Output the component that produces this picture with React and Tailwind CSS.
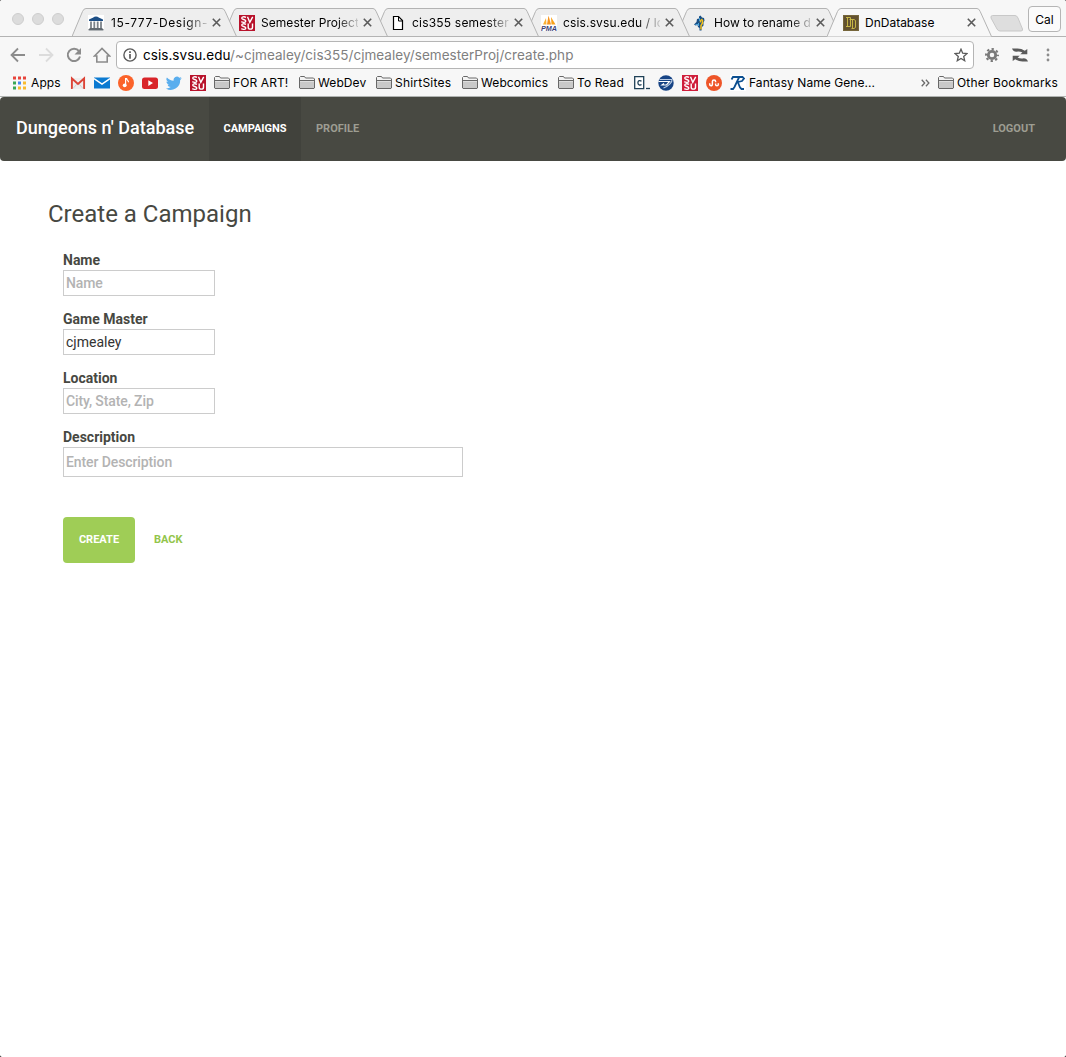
import React from "react";

const Pillars = () => (
  <svg width="16" height="16" viewBox="0 0 16 16">
    <rect width="16" height="16" fill="#fff" />
    <path d="M1 4.500C4 3.500 6 1.500 8 1.500s4 2 7 3V6H1z" fill="#1d4f86" />
    <path d="M3 6.500v7M6.300 6.500v7M9.700 6.500v7M13 6.500v7" stroke="#7b8288" strokeWidth="1.800" />
    <path d="M1.500 13h13v1h1v1.500H.500V14h1z" fill="#626a71" />
  </svg>
);

const Svsu = ({ bg = "#b8122b" }) => (
  <svg width="16" height="16" viewBox="0 0 16 16">
    <rect width="16" height="16" fill={bg} />
    <g fill="none" stroke="#fff" strokeWidth="1.400">
      <path d="M7 2.300C5 1.200 2.500 1.800 2.800 3.300c.3 1.500 4 1 4 2.700C6.800 7.600 4 7.700 2.300 6.700" />
      <path d="M8.500 1.800 10.800 7.300 13.700 1.800" />
      <path d="M7 9.300c-2-1.100-4.500-.5-4.200 1 .3 1.500 4 1 4 2.700 0 1.600-2.800 1.700-4.500.7" />
      <path d="M9.200 8.600v3.600c0 2.500 4.300 2.500 4.300 0V8.600" />
    </g>
  </svg>
);

const Page = () => (
  <svg width="16" height="16" viewBox="0 0 16 16">
    <path d="M3.500 1.500h5l4 4v9h-9z" fill="#fff" stroke="#000" strokeWidth="1.200" />
    <path d="M8.500 1.500v4.500h4" fill="none" stroke="#000" />
  </svg>
);

const Pma = () => (
  <svg width="16" height="16" viewBox="0 0 16 16">
    <rect width="16" height="16" fill="#fff" />
    <path d="M2 9.500 5 3l.5 6.500z" fill="#fbb034" />
    <path d="M6 9.500 7.500.500l2.500 9z" fill="#f7941d" />
    <path d="M10.500 9.500 10 2l4.500 7.500z" fill="#f9a21b" />
    <text x="0" y="15.600" textLength="16" lengthAdjust="spacingAndGlyphs" fontFamily="Liberation Sans" fontSize="7" fontWeight="700" fontStyle="italic" fill="#3c3f78">PMA</text>
  </svg>
);

const Knight = () => (
  <svg width="16" height="16" viewBox="0 0 16 16">
    <path d="M7 1.500 8.500.500 10 2.500l2 .5.500 2.500-1 2v3l-1.500 1.500-.5 3.500H7.500V13L6 12l-.5-2-2 .5-1.500-1L4.500 7 5 4l2-.5z" fill="#174f86" />
    <path d="M10.500 4 8.500 5.500v2M10.500 5v3L9 10.500v4" fill="none" stroke="#f7c21b" strokeWidth="1.500" />
    <path d="M3.500 9.500H6M7.500 3v3M6.500 8v3" stroke="#4ea3d8" />
  </svg>
);

const Dnd = () => (
  <svg width="16" height="16" viewBox="0 0 16 16">
    <rect width="16" height="16" fill="#63522f" />
    <rect x=".5" y=".5" width="15" height="15" fill="none" stroke="#8a7a48" strokeDasharray="1 1" />
    <path d="M3 2.500h4.500v9H3M4.500 2.500v9M6.500 4.500H11l1.500 1v7L11 13.500H8.500M9.500 4.500v9" fill="none" stroke="#d0bf48" strokeWidth=".9" />
  </svg>
);

const Folder = () => (
  <svg width="16" height="14" viewBox="0 0 16 14">
    <path d="M.5 12V1.500l1-1h4l1 1.500h8l1 1V12l-.5.500H1z" fill="#f4f4f4" stroke="#686868" />
    <path d="M1 5.500h14V12H1z" fill="#c9c9c9" />
    <path d="M1 4.500h14" stroke="#686868" />
  </svg>
);

const Gmail = () => (
  <svg width="16" height="16" viewBox="0 0 16 16">
    <path d="M1 3h14v11H1z" fill="#eee" />
    <path d="M1.900 14V3.500L8 9l6.100-5.500V14" fill="none" stroke="#dc4437" strokeWidth="1.900" />
    <path d="m3 13.500 4-4.500M13 13.500 9 9" stroke="#d0d0d0" />
  </svg>
);

const Outlook = () => (
  <svg width="16" height="16" viewBox="0 0 16 16">
    <path d="M0 2.500h16v11H0z" fill="#0b7ad1" />
    <path d="m0 3.500 8 5.500 8-5.500" fill="none" stroke="#fff" strokeWidth="1.500" />
  </svg>
);

const Note = () => (
  <svg width="16" height="16" viewBox="0 0 16 16">
    <circle cx="8" cy="8" r="8" fill="#fb632a" />
    <circle cx="6.700" cy="10.300" r="1.900" fill="#fff" />
    <path d="M7.600 10.500V3.500h1c0 1.700 1.900 1.600 1.900 3.800" fill="none" stroke="#fff" strokeWidth="1.200" />
  </svg>
);

const Youtube = () => (
  <svg width="16" height="16" viewBox="0 0 16 16">
    <rect x="0" y="2.500" width="16" height="11.500" rx="2.500" fill="#d9252a" />
    <path d="M6.300 5.300v5.600L11 8.100z" fill="#fff" />
  </svg>
);

const Twitter = () => (
  <svg width="16" height="16" viewBox="0 0 24 24" fill="#5aaeee">
    <path d="M23.600 4.900c-.9.400-1.800.7-2.800.8 1-.6 1.800-1.600 2.200-2.700-1 .6-2 1-3.100 1.200a4.900 4.900 0 0 0-8.400 4.500C7.400 8.500 3.800 6.500 1.400 3.600a4.900 4.900 0 0 0 1.500 6.600c-.8 0-1.600-.2-2.200-.6v.1c0 2.400 1.700 4.400 3.900 4.800-.7.200-1.500.2-2.200.1.600 2 2.400 3.400 4.600 3.400A9.900 9.900 0 0 1-.3 20a13.900 13.900 0 0 0 21.500-12.400c1-.7 1.800-1.600 2.400-2.700z" />
  </svg>
);

const Cbox = () => (
  <svg width="16" height="16" viewBox="0 0 16 16">
    <path d="M.7 1.700h9v12h-9z" fill="#fff" stroke="#1f4056" strokeWidth="1.300" />
    <path d="M7.500 6.200C6 5 3.900 5.600 3.900 7.800S6 10.600 7.500 9.500" fill="none" stroke="#1f4056" strokeWidth="1.300" />
    <path d="M12 13.500h4" stroke="#1f4056" strokeWidth="1.300" />
  </svg>
);

const Globe = () => (
  <svg width="16" height="16" viewBox="0 0 16 16">
    <circle cx="8" cy="8" r="7.700" fill="#174485" />
    <path d="M.5 6.500h11l-3 3.500H4l2-1.500" fill="none" stroke="#fff" strokeWidth="1.200" />
    <path d="M1.500 4.500h12.500C14.500 7 11 11 5.500 13" fill="none" stroke="#b9cbe3" strokeWidth="1.100" />
  </svg>
);

const Stumble = () => (
  <svg width="16" height="16" viewBox="0 0 16 16">
    <circle cx="8" cy="8" r="8" fill="#ee5528" />
    <path d="M3.700 8.300v1c0 1.900 2.700 1.900 2.700 0V6.500c0-1.900 3.200-1.900 3.200 0v.8M9.600 8.500v1c0 1.800 2.700 1.800 2.700 0V8.300" fill="none" stroke="#fff" strokeWidth="1.500" />
  </svg>
);

const Rune = () => (
  <svg width="16" height="16" viewBox="0 0 16 16">
    <rect width="16" height="16" fill="#fff" />
    <path d="M1.500 4.500 3 2h9.500l1.500 1.500L12 6 6 7.500M9 2.500 4.500 12 3 14H.5M8 7.500l2 5 1.500 1.500H14" fill="none" stroke="#0c4f90" strokeWidth="1.800" />
  </svg>
);

const Apps = () => (
  <svg width="14" height="14" viewBox="0 0 14 14">
    <path d="M0 .5h3v3H0zM5 .5h3v3H5zM10 .5h3v3h-3z" fill="#e8453c" />
    <path d="M0 5.500h3v3H0z" fill="#3aa757" />
    <path d="M5 5.500h3v3H5z" fill="#4688f1" />
    <path d="M10 5.500h3v3h-3z" fill="#f9bb2d" />
    <path d="M0 10.500h3v3H0z" fill="#3aa757" />
    <path d="M5 10.500h3v3H5zM10 10.500h3v3h-3z" fill="#f9bb2d" />
  </svg>
);

const tabs = [
  { icon: <Pillars />, title: "15-777-Design-", z: "z-[6]", ls: "tracking-[0.6px] indent-[1px]" },
  { icon: <Svsu />, title: "Semester Project", z: "z-[5]", ls: "tracking-[0.05px]" },
  { icon: <Page />, title: "cis355 semester", z: "z-[4]", ls: "tracking-[0.2px]" },
  { icon: <Pma />, title: "csis.svsu.edu / lo", z: "z-[3]", ls: "tracking-[0.15px]" },
  { icon: <Knight />, title: "How to rename d", z: "z-[2]", ls: "tracking-[0px]" },
  { icon: <Dnd />, title: "DnDatabase", z: "z-[7]", ls: "tracking-[0px]", active: true },
];

function Tab({ icon, title, z, ls, active }) {
  return (
    <div className={`relative -mr-[14px] h-[29px] w-[165px] shrink-0 ${z}`}>
      <svg className="absolute inset-0" width="166" height="29" viewBox="0 0 166 29">
        <path d="M0 28.500 10.500 3.500Q11.700.500 14 .500H150Q152 .500 153.200 3.500L164.500 28.500z" fill={active ? "#f7f7f7" : "#eee"} />
        <path d="M0 28.500 10.500 3.500Q11.700.500 14 .500H150Q152 .500 153.200 3.500L164.500 28.500" fill="none" stroke="#b3b3b3" />
        {!active && <path d="M0 28.500h166" stroke="#b3b3b3" />}
      </svg>
      <div className="relative flex h-[29px] items-center pl-4">
        {icon}
        <div className={`ml-[6px] w-[97px] text-[12px] leading-4 whitespace-nowrap text-black ${ls} ${active ? "" : "[mask-image:linear-gradient(to_right,black_78%,transparent_104%)]"}`}>
          {title}
        </div>
        <svg className="ml-[4.500px]" width="9" height="9" viewBox="0 0 9 9">
          <path d="m.8.800 7.400 7.400M8.200.800.800 8.200" stroke="#5a5a5a" strokeWidth="1.600" />
        </svg>
      </div>
    </div>
  );
}

const bookmarks = [
  { icon: <Apps />, label: "Apps", w: "w-[57px]", gap: "ml-1" },
  { icon: <Gmail />, w: "w-6" },
  { icon: <Outlook />, w: "w-6" },
  { icon: <Note />, w: "w-6" },
  { icon: <Youtube />, w: "w-6" },
  { icon: <Twitter />, w: "w-6" },
  { icon: <Svsu />, w: "w-6" },
  { icon: <Folder />, label: "FOR ART!", w: "w-[85px]", gap: "ml-[3px]" },
  { icon: <Folder />, label: "WebDev", w: "w-[77px]", gap: "ml-[3px]" },
  { icon: <Folder />, label: "ShirtSites", w: "w-[86px]", gap: "ml-[3px] tracking-[0.220px]" },
  { icon: <Folder />, label: "Webcomics", w: "w-[96px]", gap: "ml-[3px]" },
  { icon: <Folder />, label: "To Read", w: "w-[76px]", gap: "ml-[3px]" },
  { icon: <Cbox />, w: "w-6" },
  { icon: <Globe />, w: "w-6" },
  { icon: <Svsu bg="#cf1d3a" />, w: "w-6" },
  { icon: <Stumble />, w: "w-6" },
  { icon: <Rune />, label: "Fantasy Name Gene...", w: "w-[190px]", gap: "ml-[3px] tracking-[0.060px]" },
];

function BrowserChrome() {
  return (
    <header className="h-[97px] border-b border-[#b0b3b1] bg-[#f7f7f7] font-[Inter,sans-serif]">
      <div className="flex h-[37px] border-b border-[#b3b3b3] pl-[12px]">
        <div className="flex items-center gap-2 pt-[2px]">
          {[0, 1, 2].map((i) => (
            <span key={i} className="size-3 rounded-full border border-[#cecece] bg-[#dcdcdc]" />
          ))}
        </div>
        <div className="ml-2 flex pt-2">
          {tabs.map((t) => (
            <Tab key={t.title} {...t} />
          ))}
        </div>
        <svg className="mt-[15px] ml-[12px]" width="34" height="18" viewBox="0 0 34 18">
          <path d="M2.500.500H25q2 0 3 2.500l4.500 11q.5 2-1.500 2H10q-2 0-3-2L1 3Q.500.500 2.500.500z" fill="#dedede" stroke="#c8c8c8" />
        </svg>
        <div className="mt-[6px] ml-[4px] flex h-[26px] w-[33px] shrink-0 items-center justify-center rounded-[4px] border border-[#b5b5b5] bg-[#fbfbfb] pt-px text-[12px] text-black">Cal</div>
      </div>

      <div className="flex h-8 items-center pt-[4px]">
        <svg className="ml-[10px]" width="16" height="16" viewBox="0 0 16 16">
          <path d="M15 8H2M8 1.500 1.500 8 8 14.500" fill="none" stroke="#8c8c8c" strokeWidth="1.800" />
        </svg>
        <svg className="ml-[12px]" width="16" height="16" viewBox="0 0 16 16">
          <path d="M1 8h13M8 1.500 14.500 8 8 14.500" fill="none" stroke="#dcdcdc" strokeWidth="1.800" />
        </svg>
        <svg className="ml-[12px]" width="16" height="16" viewBox="0 0 16 16">
          <path d="M13 4.200A6.200 6.200 0 1 0 14 9.500" fill="none" stroke="#8c8c8c" strokeWidth="2" />
          <path d="M15 1v6.500H8.500z" fill="#8c8c8c" />
        </svg>
        <svg className="ml-[11px]" width="18" height="16" viewBox="0 0 18 16">
          <path d="M1.500 9 9 1.500 16.500 9h-2.300v6H3.800V9z" fill="none" stroke="#8c8c8c" strokeWidth="1.600" />
        </svg>
        <div className="ml-[5px] flex h-[28px] w-[858px] items-center rounded-[4px] border border-[#b5b5b5] bg-white pl-[6px] pr-[5px]">
          <svg width="14" height="14" viewBox="0 0 14 14">
            <circle cx="7" cy="7" r="6.100" fill="none" stroke="#5a5a5a" strokeWidth="1.400" />
            <path d="M7 3.200v1.700M7 6v4.800" stroke="#5a5a5a" strokeWidth="1.700" />
          </svg>
          <span className="ml-[6px] text-[13.5px] leading-5 tracking-[0.045px] text-[#808080]">
            <span className="text-black">csis.svsu.edu</span>/~cjmealey/cis355/cjmealey/semesterProj/create.php
          </span>
          <svg className="ml-auto" width="14" height="14" viewBox="0 0 14 14">
            <path d="m7 1.200 1.700 4 4.300.4-3.300 2.800 1 4.300L7 10.400l-3.700 2.300 1-4.300L1 5.600l4.300-.4z" fill="none" stroke="#5a5a5a" strokeWidth="1.300" />
          </svg>
        </div>
        <svg className="ml-[11px]" width="14" height="14" viewBox="0 0 14 14">
          <circle cx="7" cy="7" r="3.700" fill="none" stroke="#7a7a7a" strokeWidth="2.800" />
          <circle cx="7" cy="7" r="6" fill="none" stroke="#7a7a7a" strokeWidth="2" strokeDasharray="2.350 2.362" strokeDashoffset="1.170" />
        </svg>
        <svg className="ml-[13px]" width="16" height="14" viewBox="0 0 16 14" fill="#5a5a5a">
          <path d="M0 .5H4Q9 0 12.800 2.700L15.300.900V6.300H8.200L10.400 4.600Q7.500 3 4.500 3.700 1.500 3.900 0 .5z" />
          <path d="M16 13.500H12Q7 14 3.200 11.300L.700 13.100V7.700H7.800L5.600 9.400Q8.500 11 11.500 10.300 14.500 10.100 16 13.500z" />
        </svg>
        <svg className="ml-[18px]" width="4" height="14" viewBox="0 0 4 14" fill="#8c8c8c">
          <circle cx="2" cy="2" r="1.400" />
          <circle cx="2" cy="7" r="1.400" />
          <circle cx="2" cy="12" r="1.400" />
        </svg>
      </div>

      <nav className="flex h-[27px] items-center pl-[13px] text-[12px] tracking-[0.1px] text-black">
        {bookmarks.map((b, i) => (
          <div key={i} className={`flex shrink-0 items-center whitespace-nowrap ${b.w}`}>
            {b.icon}
            {b.label && <span className={b.gap}>{b.label}</span>}
          </div>
        ))}
        <svg className="ml-[1px]" width="9" height="8" viewBox="0 0 9 8">
          <path d="m.7.700 3 3.300-3 3.300M4.900.700l3 3.300-3 3.300" fill="none" stroke="#6b6b6b" strokeWidth="1.300" />
        </svg>
        <div className="ml-[8px] flex shrink-0 items-center whitespace-nowrap">
          <Folder />
          <span className="ml-[3px] tracking-[0.150px]">Other Bookmarks</span>
        </div>
      </nav>
    </header>
  );
}

function Field({ label, value, placeholder, size = "h-[26px] w-[152px]" }) {
  return (
    <div className="mb-[13px]">
      <label className="block h-5 text-[14px] leading-5 font-bold text-[#474842]">{label}</label>
      <input
        className={`block rounded-none border border-[#ccc] bg-white px-[2px] text-[14px] text-[#333] outline-none placeholder:font-medium placeholder:tracking-[-0.1px] placeholder:text-[#b3b3b3] placeholder:opacity-100 ${size}`}
        defaultValue={value}
        placeholder={placeholder}
      />
    </div>
  );
}

export default function App() {
  return (
    <div className="h-[1057px] w-[1066px] overflow-hidden bg-black">
      <div className="h-full overflow-hidden rounded-[2px] bg-white font-[Roboto,sans-serif]">
        <BrowserChrome />
        <nav className="flex h-16 rounded-[4px] bg-[#484942] text-[11px] font-bold text-[#9d9d92]">
          <a className="w-[209px] pt-[17px] pl-4 text-[18px] leading-[27px] font-medium text-white">Dungeons n' Database</a>
          <a className="w-[92px] bg-[#41423c] text-center leading-[64px] text-white">CAMPAIGNS</a>
          <a className="ml-[15px] leading-[64px]">PROFILE</a>
          <a className="mr-[31px] ml-auto leading-[64px]">LOGOUT</a>
        </nav>
        <main className="px-12 pt-[36px]">
          <h1 className="h-[53px] text-[24px] leading-[34px] text-[#474842]">Create a Campaign</h1>
          <form className="pl-[15px]">
            <Field label="Name" placeholder="Name" />
            <Field label="Game Master" value="cjmealey" />
            <Field label="Location" placeholder="City, State, Zip" />
            <Field label="Description" placeholder="Enter Description" size="h-[30px] w-[400px]" />
            <div className="mt-10 flex text-[11px] font-bold">
              <button type="button" className="h-[46px] w-[72px] rounded-[4px] bg-[#9fcd56] text-white">CREATE</button>
              <a className="ml-[19px] leading-[46px] text-[#93c54b]">BACK</a>
            </div>
          </form>
        </main>
      </div>
    </div>
  );
}
